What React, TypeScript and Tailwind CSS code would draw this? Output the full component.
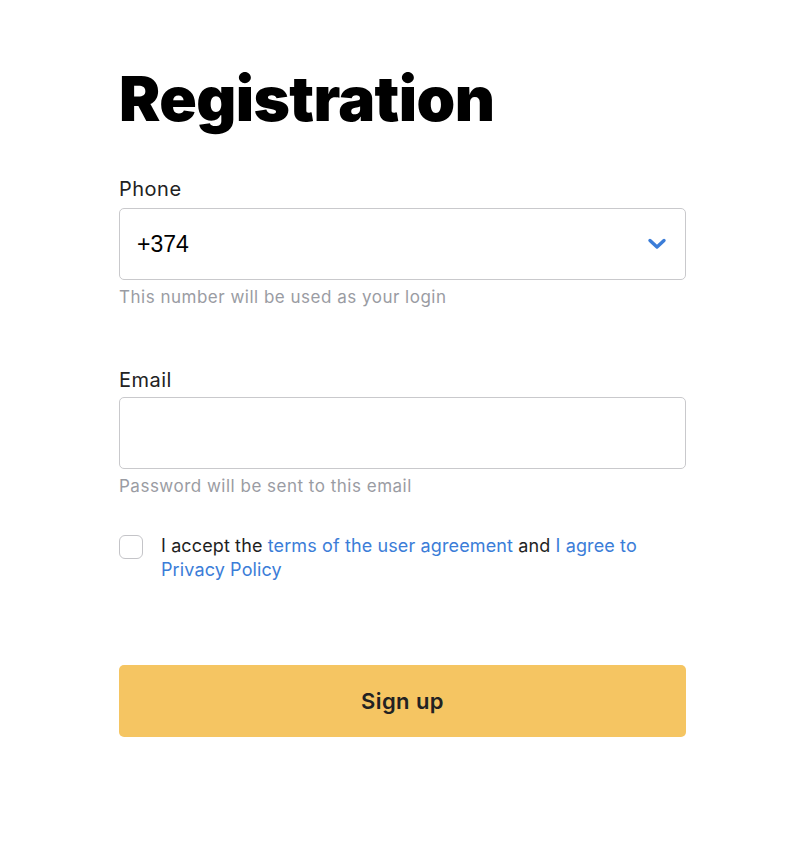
import { useState } from "react";

export default function App() {
    const [accepted, setAccepted] = useState(false);

    return (
        <div className="min-h-screen bg-white text-[#1f1f1f] font-['Inter',sans-serif]">
            <main className="w-[567px] ml-[119px] pt-[64px]">
                <h1 className="text-[62px] leading-[70px] font-black tracking-[-0.6px] text-black">Registration</h1>

                <div className="mt-[43px]">
                    <label className="block text-[20px] leading-[24px] tracking-[0.5px] text-[#222]">Phone</label>
                    <div className="mt-[7px] h-[72px] border border-[#c9c9cc] rounded-[5px] flex items-center justify-between pl-[17px] pr-[17px]">
                        <span className="text-[23px] font-['Liberation_Sans',sans-serif] text-black">+374</span>
                        <svg width="20" height="12" viewBox="0 0 20 12" className="mr-px">
                            <path d="M3 2.5 L10 9 L17 2.5" fill="none" stroke="#3b7dd8" strokeWidth="3.4" strokeLinecap="round" strokeLinejoin="round" />
                        </svg>
                    </div>
                    <p className="mt-[6px] text-[17px] leading-[22px] tracking-[0.5px] text-[#9a9ca3]">This number will be used as your login</p>
                </div>

                <div className="mt-[60px]">
                    <label className="block text-[20px] leading-[24px] tracking-[0.5px] text-[#222]">Email</label>
                    <input
                        type="email"
                        className="mt-[5px] block w-full h-[72px] border border-[#c9c9cc] rounded-[5px] px-[17px] text-[20px] outline-none"
                    />
                    <p className="mt-[6px] text-[17px] leading-[22px] tracking-[0.5px] text-[#9a9ca3]">Password will be sent to this email</p>
                </div>

                <div className="mt-[37px] flex items-start gap-[18px]">
                    <button
                        type="button"
                        onClick={() => setAccepted(!accepted)}
                        className="mt-[1px] w-[24px] h-[24px] shrink-0 border border-[#c4c4c8] rounded-[6px] bg-white"
                    >
                        {accepted && <span className="block w-full h-full bg-[#3b7dd8] rounded-[5px]" />}
                    </button>
                    <p className="text-[18px] leading-[24px] tracking-[0.12px] text-[#1f1f1f]">
                        I accept the <a className="text-[#3b7dd8]">terms of the user agreement</a> and <a className="text-[#3b7dd8]">I agree to Privacy Policy</a>
                    </p>
                </div>

                <button
                    type="submit"
                    className="mt-[83px] w-full h-[72px] rounded-[5px] bg-[#f5c562] text-[22px] font-semibold tracking-[0.4px] text-[#222]"
                >
                    Sign up
                </button>
            </main>
        </div>
    );
}
